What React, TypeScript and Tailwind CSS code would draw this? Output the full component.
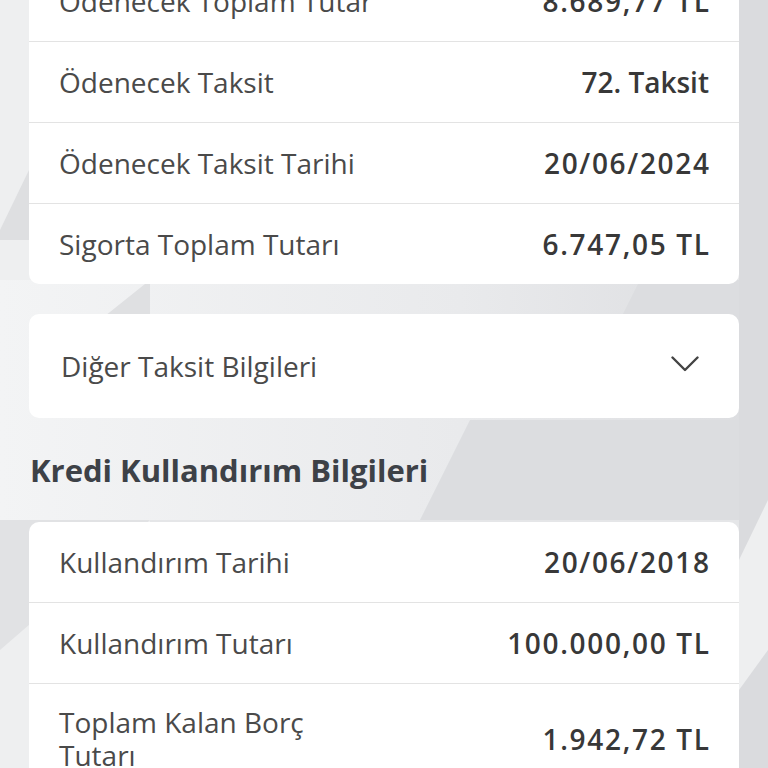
const topRows = [
  { label: 'Ödenecek Toplam Tutar', value: '8.689,77 TL', num: true },
  { label: 'Ödenecek Taksit', value: '72. Taksit', num: false },
  { label: 'Ödenecek Taksit Tarihi', value: '20/06/2024', num: true },
  { label: 'Sigorta Toplam Tutarı', value: '6.747,05 TL', num: true },
];

const usageRows = [
  { label: 'Kullandırım Tarihi', value: '20/06/2018', num: true },
  { label: 'Kullandırım Tutarı', value: '100.000,00 TL', num: true },
];

function Row({ label, value, num }: { label: string; value: string; num: boolean }) {
  return (
    <div className="flex h-[81px] items-center justify-between border-t border-[#e3e3e3] px-[30px] first:h-[80px] first:border-t-0">
      <span className="text-[28px] font-normal text-[#4a4a4a]">{label}</span>
      <span
        className={
          num
            ? '-mr-[0.06em] text-[28px] font-semibold tracking-[0.06em] text-[#383838]'
            : 'text-[28px] font-semibold text-[#383838]'
        }
      >
        {value}
      </span>
    </div>
  );
}

function Backdrop() {
  return (
    <svg className="absolute inset-0 h-full w-full" viewBox="0 0 768 768" preserveAspectRatio="none">
      <defs>
        <linearGradient id="band" x1="0" y1="0" x2="1" y2="0">
          <stop offset="0" stopColor="#f3f4f5" />
          <stop offset="0.6" stopColor="#e9eaec" />
          <stop offset="1" stopColor="#dcdde0" />
        </linearGradient>
      </defs>
      <rect width="768" height="768" fill="#e5e6e8" />
      <polygon points="0,0 150,0 150,768 0,768" fill="#eeeff0" />
      <polygon points="0,230 29,170 29,240 0,240" fill="#dedfe1" />
      <rect x="0" y="280" width="768" height="240" fill="url(#band)" />
      <polygon points="100,320 150,280 150,320" fill="#dfe0e2" />
      <polygon points="620,320 640,280 768,280 768,320" fill="#dcdde0" />
      <polygon points="420,520 470,420 768,420 768,520" fill="#dcdde0" />
      <polygon points="0,520 150,520 0,650" fill="#e1e2e4" />
      <polygon points="739,0 768,0 768,768 739,768" fill="#dadbde" />
      <polygon points="739,560 768,500 768,650 739,690" fill="#eeeff0" />
    </svg>
  );
}

export default function App() {
  return (
    <div className="relative h-[768px] w-full overflow-hidden" style={{ fontFamily: '"Open Sans", Lato, sans-serif' }}>
      <Backdrop />
      <div className="relative -mt-[39px] flex flex-col px-[29px]">
        <div className="overflow-hidden rounded-[10px] bg-white">
          {topRows.map((r) => (
            <Row key={r.label} {...r} />
          ))}
        </div>

        <div className="mt-[30px] flex h-[104px] items-center justify-between rounded-[10px] bg-white pl-[32px] pr-[40px]">
          <span className="text-[28px] font-normal text-[#4a4a4a]">Diğer Taksit Bilgileri</span>
          <svg width="28" height="16" viewBox="0 0 28 16" fill="none" className="-mt-[4px]">
            <polyline points="1.5,1.5 14,14 26.5,1.5" stroke="#444" strokeWidth="2.4" strokeLinecap="round" strokeLinejoin="round" />
          </svg>
        </div>

        <h2 className="mt-[32px] pl-px text-[31px] font-bold leading-[40px] text-[#3d4147]">Kredi Kullandırım Bilgileri</h2>

        <div className="mt-[32px] overflow-hidden rounded-[10px] bg-white">
          {usageRows.map((r) => (
            <Row key={r.label} {...r} />
          ))}
          <div className="flex items-center justify-between border-t border-[#e3e3e3] px-[30px] pt-[22px] pb-[16px]">
            <span className="w-[270px] text-[28px] leading-[33px] font-normal text-[#4a4a4a]">Toplam Kalan Borç Tutarı</span>
            <span className="-mr-[0.06em] text-[28px] font-semibold tracking-[0.06em] text-[#383838]">1.942,72 TL</span>
          </div>
        </div>
      </div>
    </div>
  );
}
